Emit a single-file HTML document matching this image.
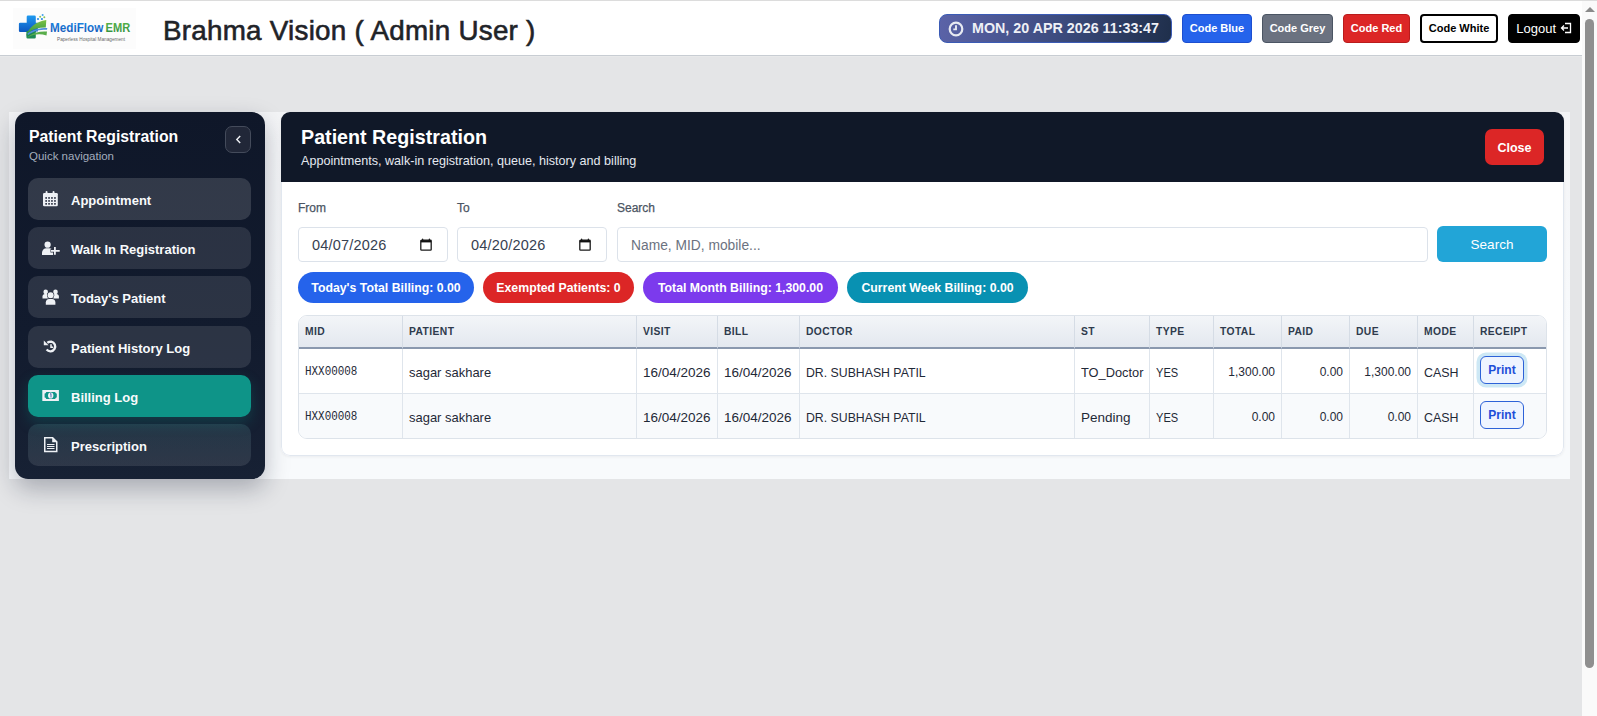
<!DOCTYPE html>
<html><head><meta charset="utf-8">
<style>
*{box-sizing:border-box;margin:0;padding:0}
html,body{width:1597px;height:716px;overflow:hidden}
body{background:#e4e5e7;font-family:"Liberation Sans",sans-serif;position:relative;color:#1f2937}
.topline{position:absolute;left:0;top:0;width:1597px;height:1px;background:#dcdcdc}
.hdr{position:absolute;left:0;top:1px;width:1582px;height:55px;background:#fff;border-bottom:1px solid #c8cdd3}
.hdr::after{content:"";position:absolute;left:0;top:55px;width:1582px;height:1px;background:#e8e9ea}
.logo{position:absolute;left:13px;top:7px;width:123px;height:41px;background:#fcfcfc;overflow:hidden}
.title{position:absolute;left:163px;top:14px;font-size:27.8px;font-weight:normal;letter-spacing:.25px;-webkit-text-stroke:.6px #1f2328;color:#1f2328;white-space:nowrap;line-height:32px}
.dt{position:absolute;left:939px;top:13px;width:233px;height:29px;border-radius:8px;border:1px solid #3b5bb5;background:linear-gradient(100deg,#5b63a8 0%,#3d4c80 50%,#1f2f4b 100%);color:#eef0f6;font-weight:bold;font-size:14.3px;line-height:27px;white-space:nowrap}
.dt .clk{position:absolute;left:8px;top:5.5px;width:16px;height:16px}
.dt span{position:absolute;left:32px;top:0}
.cb{position:absolute;top:13px;height:29px;border-radius:4px;font-weight:bold;font-size:11px;color:#fff;text-align:center;line-height:27px;white-space:nowrap}
.scroll{position:absolute;left:1582px;top:1px;width:15px;height:715px;background:#fafafa}
.scroll .up{position:absolute;left:2.5px;top:6px;width:0;height:0;border-left:5px solid transparent;border-right:5px solid transparent;border-bottom:5px solid #8a8a8a}
.scroll .th{position:absolute;left:3px;top:18px;width:9px;height:649px;border-radius:5px;background:#8f8f8f}

.wrap{position:absolute;left:9px;top:112px;width:1561px;height:367px;background:linear-gradient(180deg,#f3f4f6,#f8fafc 60%)}
.side{position:absolute;left:15px;top:112px;width:250px;height:367px;border-radius:13px;background:linear-gradient(180deg,#0f1729 0%,#121b2e 60%,#172134 100%);box-shadow:0 10px 24px rgba(15,23,42,.28)}
.side h2{position:absolute;left:14px;top:16px;font-size:15.8px;font-weight:bold;color:#fff;white-space:nowrap}
.side .sub{position:absolute;left:14px;top:38px;font-size:11.5px;color:#a3adbd;white-space:nowrap}
.side .col{position:absolute;left:210px;top:14px;width:26px;height:27px;border-radius:7px;background:#212738;border:1px solid #444b5b}
.item{position:absolute;left:13px;width:223px;height:42px;border-radius:10px;background:rgba(255,255,255,.11);color:#f8fafc;font-weight:bold;font-size:13px}
.item span{position:absolute;left:43px;top:15px;white-space:nowrap}
.item svg{position:absolute;left:13px;top:12px}
.item.act{background:#0e9488;box-shadow:0 6px 14px rgba(13,148,136,.25)}

.panel{position:absolute;left:281px;top:112px;width:1283px;height:344px;border-radius:9px;background:#fff;box-shadow:0 1px 3px rgba(15,23,42,.06);overflow:hidden}
.panel::after{content:"";position:absolute;left:0;top:0;right:0;bottom:0;border:1px solid #e1e7ef;border-radius:9px;z-index:1}
.ph{position:absolute;left:0;top:0;z-index:2;width:1283px;height:70px;background:#101828}
.ph h1{position:absolute;left:20px;top:14px;font-size:19.7px;font-weight:bold;color:#fff;white-space:nowrap}
.ph p{position:absolute;left:20px;top:42px;font-size:12.6px;color:#e5e9f0;white-space:nowrap}
.close{position:absolute;left:1204px;top:17px;width:59px;height:36px;border-radius:7px;background:#dc2626;color:#fff;font-weight:bold;font-size:12.5px;text-align:center;line-height:38px}
.lbl{position:absolute;top:89px;font-size:12px;color:#4b5563;-webkit-text-stroke:.25px #4b5563;white-space:nowrap}
.inp{position:absolute;top:115px;height:35px;border:1px solid #dce2ea;border-radius:4px;background:#fff;font-size:14.5px;letter-spacing:.2px;color:#374151;line-height:35px;padding-left:13px;white-space:nowrap}
.inp .cal{position:absolute;right:15px;top:10px;width:12px;height:13px}
.sbtn{position:absolute;left:1156px;top:114px;width:110px;height:36px;border-radius:6px;background:#22a5d7;color:#fff;font-size:13.5px;text-align:center;line-height:37px}
.badge{position:absolute;top:160px;height:31px;border-radius:16px;color:#fff;font-weight:bold;font-size:12.3px;line-height:33px;text-align:center;white-space:nowrap}

table{table-layout:fixed;position:absolute;left:17px;top:203px;width:1248px;border-collapse:separate;border-spacing:0;border:1px solid #dde3ea;border-radius:9px;overflow:hidden}
th{height:33px;background:linear-gradient(180deg,#f3f5f8,#e3e8ef);border-bottom:2px solid #8a98ae;border-right:1px solid #d5dce5;text-align:left;font-size:10.3px;font-weight:bold;letter-spacing:.4px;padding-bottom:2px;color:#2f3b4d;padding:0 6px}
td{height:44.5px;border-right:1px solid #dfe5ec;border-bottom:1px solid #dfe5ec;font-size:13.5px;color:#1f2937;padding:3px 6px 0;white-space:nowrap}
tr.r2 td{background:#f8fafc;border-bottom:none}
th:last-child,td:last-child{border-right:none}
.sx{display:inline-block;transform-origin:0 50%}
td.mono{font-family:"Liberation Mono",monospace;font-size:12px;padding-left:5.5px;color:#1f2937}
td.num{text-align:right;font-size:12px}
.pr{display:inline-block;width:44px;height:28px;border:1.5px solid #2d62d8;border-radius:6px;background:#eef4ff;color:#1d4ed8;font-weight:bold;font-size:12px;text-align:center;line-height:27px;position:relative;left:0;top:-2px}
.pr.f{box-shadow:0 0 0 3.5px #cde8f5}
</style></head><body>
<div class="topline"></div>
<div class="hdr">
  <div class="logo"><svg width="123" height="41" viewBox="0 0 123 41">
<defs><linearGradient id="gb" x1="0" y1="0" x2="0" y2="1"><stop offset="0" stop-color="#1e9af0"/><stop offset="1" stop-color="#0d56c0"/></linearGradient>
<linearGradient id="gg" x1="0" y1="0" x2="0" y2="1"><stop offset="0" stop-color="#7cc242"/><stop offset="1" stop-color="#1f8a4c"/></linearGradient>
<linearGradient id="gt" x1="0" y1="0" x2="0" y2="1"><stop offset="0" stop-color="#1a8ae6"/><stop offset="1" stop-color="#1450b0"/></linearGradient>
<linearGradient id="ge" x1="0" y1="0" x2="0" y2="1"><stop offset="0" stop-color="#5cb54a"/><stop offset="1" stop-color="#2a8c3e"/></linearGradient></defs>
<path d="M15 7.4h6.5a1.3 1.3 0 0 1 1.3 1.3v6h2v8.8h-2v0.5H7.2a1.3 1.3 0 0 1-1.3-1.3V16a1.3 1.3 0 0 1 1.3-1.3h6.5v-6A1.3 1.3 0 0 1 15 7.4z" fill="url(#gb)"/>
<path d="M13.4 23h9.4v6.2a1.3 1.3 0 0 1-1.3 1.3h-6.8a1.3 1.3 0 0 1-1.3-1.3z" fill="#1f8a55"/>
<path d="M12.8 28.5C15.5 19.5 23 13.5 33.3 12L32.8 19.6C26 19.5 20 21 15 25Z" fill="url(#gg)"/>
<path d="M14.5 25.5C20 21.5 26 20 34.3 20L34 21.8C27 21.7 21 22.8 15 27Z" fill="#4f8fdc"/>
<path d="M14.5 29C20.5 24.5 27 23 34 23.5L33.5 27.5C27 25.5 21 26 14.5 29.5Z" fill="#59ad4b"/>
<circle cx="25" cy="11" r="1.1" fill="#2b8de8"/><circle cx="28.9" cy="11" r="1.1" fill="#2b8de8"/><circle cx="27.2" cy="8.8" r="1" fill="#86c45a"/><circle cx="31.3" cy="9.3" r="1" fill="#86c45a"/><circle cx="29.6" cy="6.9" r="1" fill="#3fa2ee"/>
<text x="37" y="24" font-family="Liberation Sans" font-weight="bold" font-size="12.2" textLength="53.3" lengthAdjust="spacingAndGlyphs" fill="url(#gt)">MediFlow</text>
<text x="92.6" y="24" font-family="Liberation Sans" font-weight="bold" font-size="12.2" textLength="24.6" lengthAdjust="spacingAndGlyphs" fill="url(#ge)">EMR</text>
<text x="44" y="32.5" font-family="Liberation Sans" font-size="4.6" textLength="68" lengthAdjust="spacingAndGlyphs" fill="#6b6b6b">Paperless Hospital Management</text>
</svg></div>
  <div class="title">Brahma Vision ( Admin User )</div>
  <div class="dt"><svg class="clk" viewBox="0 0 16 16"><circle cx="8" cy="8" r="6.3" fill="none" stroke="#e8eaf2" stroke-width="2.2"/><path d="M8 4.2V8.4H5.3" fill="none" stroke="#e8eaf2" stroke-width="1.9"/></svg><span>MON, 20 APR 2026 11:33:47</span></div>
  <div class="cb" style="left:1182px;width:70px;background:#2563eb;border:1px solid #1d4fd0">Code Blue</div>
  <div class="cb" style="left:1262px;width:71px;background:#6b7280;border:1px solid #4b5563">Code Grey</div>
  <div class="cb" style="left:1343px;width:67px;background:#dc2626;border:1px solid #b91c1c">Code Red</div>
  <div class="cb" style="left:1420px;width:78px;background:#fff;border:2px solid #000;color:#000;line-height:25px">Code White</div>
  <div class="cb" style="left:1508px;width:72px;background:#000;border:1px solid #000;font-weight:normal;font-size:13px">Logout <svg width="12" height="12" viewBox="0 0 12 12" style="vertical-align:-1px"><path d="M5 1.5h5.5v9H5" fill="none" stroke="#fff" stroke-width="1.3"/><path d="M8 6H1.5M4 3.5L1.5 6 4 8.5" fill="none" stroke="#fff" stroke-width="1.3"/></svg></div>
</div>
<div class="scroll"><div class="up"></div><div class="th"></div></div>

<div class="wrap"></div>
<div class="side">
  <h2>Patient Registration</h2>
  <div class="sub">Quick navigation</div>
  <div class="col"><svg width="26" height="26" viewBox="0 0 26 26" style="position:absolute;left:-1px;top:-1px"><path d="M15.2 10L11.8 13.5l3.4 3.5" fill="none" stroke="#eef0f4" stroke-width="1.4"/></svg></div>
  <div class="item" style="top:66px;background:rgba(255,255,255,.145)"><svg width="20" height="18" viewBox="0 0 20 18"><rect x="2" y="3" width="14.8" height="13.2" rx="1.2" fill="#eef1f5"/><rect x="4.6" y="1" width="1.9" height="3.5" rx=".9" fill="#eef1f5"/><rect x="11.6" y="1" width="1.9" height="3.5" rx=".9" fill="#eef1f5"/><g fill="#343a4a"><rect x="4.3" y="7.1" width="1.7" height="1.7"/><rect x="7.2" y="7.1" width="1.7" height="1.7"/><rect x="10.1" y="7.1" width="1.7" height="1.7"/><rect x="13.1" y="7.1" width="1.7" height="1.7"/><rect x="4.3" y="10.1" width="1.7" height="1.7"/><rect x="7.2" y="10.1" width="1.7" height="1.7"/><rect x="10.1" y="10.1" width="1.7" height="1.7"/><rect x="13.1" y="10.1" width="1.7" height="1.7"/><rect x="4.3" y="13" width="1.7" height="1.7"/><rect x="7.2" y="13" width="1.7" height="1.7"/><rect x="10.1" y="13" width="1.7" height="1.7"/><rect x="13.1" y="13" width="1.7" height="1.7"/></g></svg><span>Appointment</span></div>
  <div class="item" style="top:115px"><svg width="20" height="18" viewBox="0 0 20 18"><circle cx="6.6" cy="5.7" r="3.1" fill="#eef1f5"/><path d="M1 16v-2.3C1 11.2 3 9.3 5.5 9.3h2.6c2.5 0 4.5 1.9 4.5 4.4V16z" fill="#eef1f5"/><path d="M13.9 7.5v8.5M9.5 11.8h9.4" stroke="#2d3343" stroke-width="3.6"/><path d="M13.9 8v7.8M10 11.8h8.7" stroke="#eef1f5" stroke-width="1.8"/></svg><span>Walk In Registration</span></div>
  <div class="item" style="top:164px"><svg width="20" height="18" viewBox="0 0 20 18"><circle cx="4.7" cy="3.9" r="2.3" fill="#eef1f5"/><circle cx="14.5" cy="3.9" r="2.3" fill="#eef1f5"/><path d="M1.5 10.5V8.5c0-1.4 1-2.5 2.4-2.5h1.6c1.4 0 2.4 1.1 2.4 2.5v2z" fill="#eef1f5"/><path d="M11.5 10.5V8.5c0-1.4 1-2.5 2.4-2.5h1.6c1.4 0 2.4 1.1 2.4 2.5v2z" fill="#eef1f5"/><circle cx="9.6" cy="7.3" r="3.6" fill="#2d3343"/><circle cx="9.6" cy="7.3" r="3" fill="#eef1f5"/><path d="M4.3 16.8v-2.8c0-2 1.6-3.6 3.6-3.6h3.4c2 0 3.6 1.6 3.6 3.6v2.8z" fill="#2d3343"/><path d="M4.8 16.8v-2.6c0-1.8 1.4-3.2 3.2-3.2h3.2c1.8 0 3.2 1.4 3.2 3.2v2.6z" fill="#eef1f5"/></svg><span>Today's Patient</span></div>
  <div class="item" style="top:214px"><svg width="20" height="18" viewBox="0 0 20 18"><path d="M6.3 4.8C7.4 4 8.8 3.6 10.3 3.6A4.9 4.9 0 1 1 5.6 11.6" fill="none" stroke="#eef1f5" stroke-width="2.3"/><path d="M2.8 2.4V7.2H7.6z" fill="#eef1f5"/><path d="M10 6.2v3h2.2" fill="none" stroke="#eef1f5" stroke-width="1.5"/></svg><span>Patient History Log</span></div>
  <div class="item act" style="top:263px"><svg width="20" height="18" viewBox="0 0 20 18"><rect x="1.3" y="3" width="16.6" height="11" fill="#eef1f5"/><path d="M5.2 4.9h9c0 .9.8 1.5 1.6 1.5v4.2c-.8 0-1.6.6-1.6 1.5h-9c0-.9-.8-1.5-1.6-1.5V6.4c.8 0 1.6-.6 1.6-1.5z" fill="#0e9488"/><ellipse cx="9.7" cy="8.5" rx="2.7" ry="3.1" fill="#eef1f5"/><path d="M9 7.2l1-.7v4" fill="none" stroke="#3b5fae" stroke-width=".9"/></svg><span>Billing Log</span></div>
  <div class="item" style="top:312px;background:linear-gradient(180deg,rgba(120,200,200,.14),rgba(255,255,255,.1))"><svg width="20" height="18" viewBox="0 0 20 18"><path d="M3.75 1.75h7.9l4.1 4.1v9.65H3.75z" fill="none" stroke="#eef1f5" stroke-width="1.5"/><path d="M11.2 1.5l4.8 4.8h-4.8z" fill="#eef1f5"/><path d="M6 8.5h7.5M6 10.5h7.5M6 12.5h7.5" stroke="#eef1f5" stroke-width="1"/></svg><span>Prescription</span></div>
</div>

<div class="panel">
  <div class="ph"><h1>Patient Registration</h1><p>Appointments, walk-in registration, queue, history and billing</p><div class="close">Close</div></div>
  <div class="lbl" style="left:17px">From</div>
  <div class="lbl" style="left:176px">To</div>
  <div class="lbl" style="left:336px">Search</div>
  <div class="inp" style="left:17px;width:150px">04/07/2026<svg class="cal" viewBox="0 0 12 13"><rect x="0.8" y="2.2" width="10.4" height="10" rx=".8" fill="none" stroke="#1a1a1a" stroke-width="1.3"/><rect x="0.8" y="2.2" width="10.4" height="2.2" fill="#111"/><path d="M1.8 2.4L2.4 .6h.6l.5 1.8zM8.5 2.4L9 .6h.6l.6 1.8z" fill="#111"/></svg></div>
  <div class="inp" style="left:176px;width:150px">04/20/2026<svg class="cal" viewBox="0 0 12 13"><rect x="0.8" y="2.2" width="10.4" height="10" rx=".8" fill="none" stroke="#1a1a1a" stroke-width="1.3"/><rect x="0.8" y="2.2" width="10.4" height="2.2" fill="#111"/><path d="M1.8 2.4L2.4 .6h.6l.5 1.8zM8.5 2.4L9 .6h.6l.6 1.8z" fill="#111"/></svg></div>
  <div class="inp" style="left:336px;width:811px;color:#6b7280;font-size:13.8px;letter-spacing:0">Name, MID, mobile...</div>
  <div class="sbtn">Search</div>
  <div class="badge" style="left:17px;width:176px;background:#2563eb">Today's Total Billing: 0.00</div>
  <div class="badge" style="left:202px;width:151px;background:#dc2626">Exempted Patients: 0</div>
  <div class="badge" style="left:362px;width:195px;background:#7c3aed">Total Month Billing: 1,300.00</div>
  <div class="badge" style="left:566px;width:181px;background:#0891b2">Current Week Billing: 0.00</div>
  <table>
    <colgroup><col style="width:104px"><col style="width:234px"><col style="width:81px"><col style="width:82px"><col style="width:275px"><col style="width:75px"><col style="width:64px"><col style="width:68px"><col style="width:68px"><col style="width:68px"><col style="width:56px"><col style="width:72px"></colgroup>
    <tr><th>MID</th><th>PATIENT</th><th>VISIT</th><th>BILL</th><th>DOCTOR</th><th>ST</th><th>TYPE</th><th>TOTAL</th><th>PAID</th><th>DUE</th><th>MODE</th><th>RECEIPT</th></tr>
    <tr><td class="mono"><span class="sx" style="transform:scaleX(.91)">HXX00008</span></td><td><span class="sx" style="transform:scaleX(.96)">sagar sakhare</span></td><td>16/04/2026</td><td>16/04/2026</td><td><span class="sx" style="transform:scaleX(.91)">DR. SUBHASH PATIL</span></td><td><span class="sx" style="transform:scaleX(.95)">TO_Doctor</span></td><td><span class="sx" style="transform:scaleX(.82)">YES</span></td><td class="num">1,300.00</td><td class="num">0.00</td><td class="num">1,300.00</td><td><span class="sx" style="transform:scaleX(.92)">CASH</span></td><td><span class="pr f">Print</span></td></tr>
    <tr class="r2"><td class="mono"><span class="sx" style="transform:scaleX(.91)">HXX00008</span></td><td><span class="sx" style="transform:scaleX(.96)">sagar sakhare</span></td><td>16/04/2026</td><td>16/04/2026</td><td><span class="sx" style="transform:scaleX(.91)">DR. SUBHASH PATIL</span></td><td>Pending</td><td><span class="sx" style="transform:scaleX(.82)">YES</span></td><td class="num">0.00</td><td class="num">0.00</td><td class="num">0.00</td><td><span class="sx" style="transform:scaleX(.92)">CASH</span></td><td><span class="pr">Print</span></td></tr>
  </table>
</div>
</body></html>
